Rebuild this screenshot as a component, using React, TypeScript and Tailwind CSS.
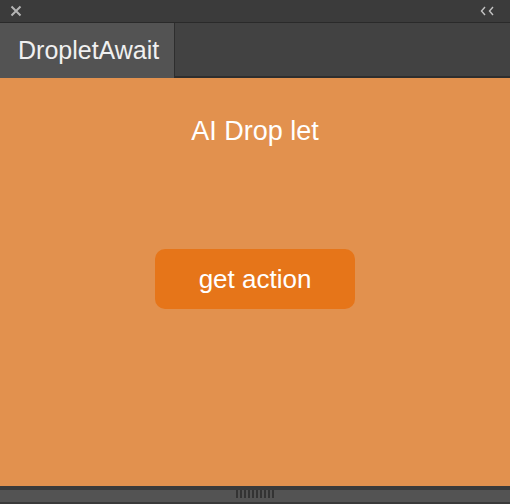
import React from 'react';

const font = { fontFamily: '"Liberation Sans", Arial, sans-serif' };

export default function App() {
  return (
    <div className="w-[510px] h-[504px] flex flex-col bg-[#323232] overflow-hidden" style={font}>
      {/* Title bar */}
      <div className="h-[22px] flex items-center justify-between px-[10px] bg-[#3b3b3b]">
        <svg width="12" height="12" viewBox="0 0 12 12">
          <path d="M1.5 1.5l9 9M10.5 1.5l-9 9" stroke="#b4b4b4" strokeWidth="2" />
        </svg>
        <svg width="16" height="10" viewBox="0 0 16 10" className="mr-[4px]">
          <path d="M5 1L1.5 5L5 9M13 1L9.5 5L13 9" stroke="#c4c4c4" strokeWidth="1.4" fill="none" />
        </svg>
      </div>
      <div className="h-[1px] bg-[#2a2a2a]" />

      {/* Tab row */}
      <div className="h-[55px] flex bg-[#424242]">
        <div className="w-[174px] bg-[#535353] flex items-center pl-[18px] text-[25px] text-[#f0f0f0]">
          DropletAwait
        </div>
        <div className="flex-1 border-l border-l-[#2e2e2e] border-b-2 border-b-[#2e2e2e]" />
      </div>

      {/* Content */}
      <div className="h-[408px] bg-[#e2914e] flex flex-col items-center">
        <div className="mt-[40px] text-[27px] text-white leading-none">AI Drop let</div>
        <button className="mt-[104px] w-[200px] h-[60px] rounded-[10px] bg-[#e67519] text-white text-[26px]">
          get action
        </button>
      </div>

      {/* Bottom resize bar */}
      <div className="h-[4px] bg-[#3a3a3a]" />
      <div className="h-[12px] bg-[#535353] flex justify-center items-start">
        <div className="flex gap-[2px]">
          {Array.from({ length: 10 }).map((_, i) => (
            <div key={i} className="w-[2px] h-[8px] bg-[#333333]" />
          ))}
        </div>
      </div>
      <div className="flex-1 bg-[#3a3a3a]" />
    </div>
  );
}
